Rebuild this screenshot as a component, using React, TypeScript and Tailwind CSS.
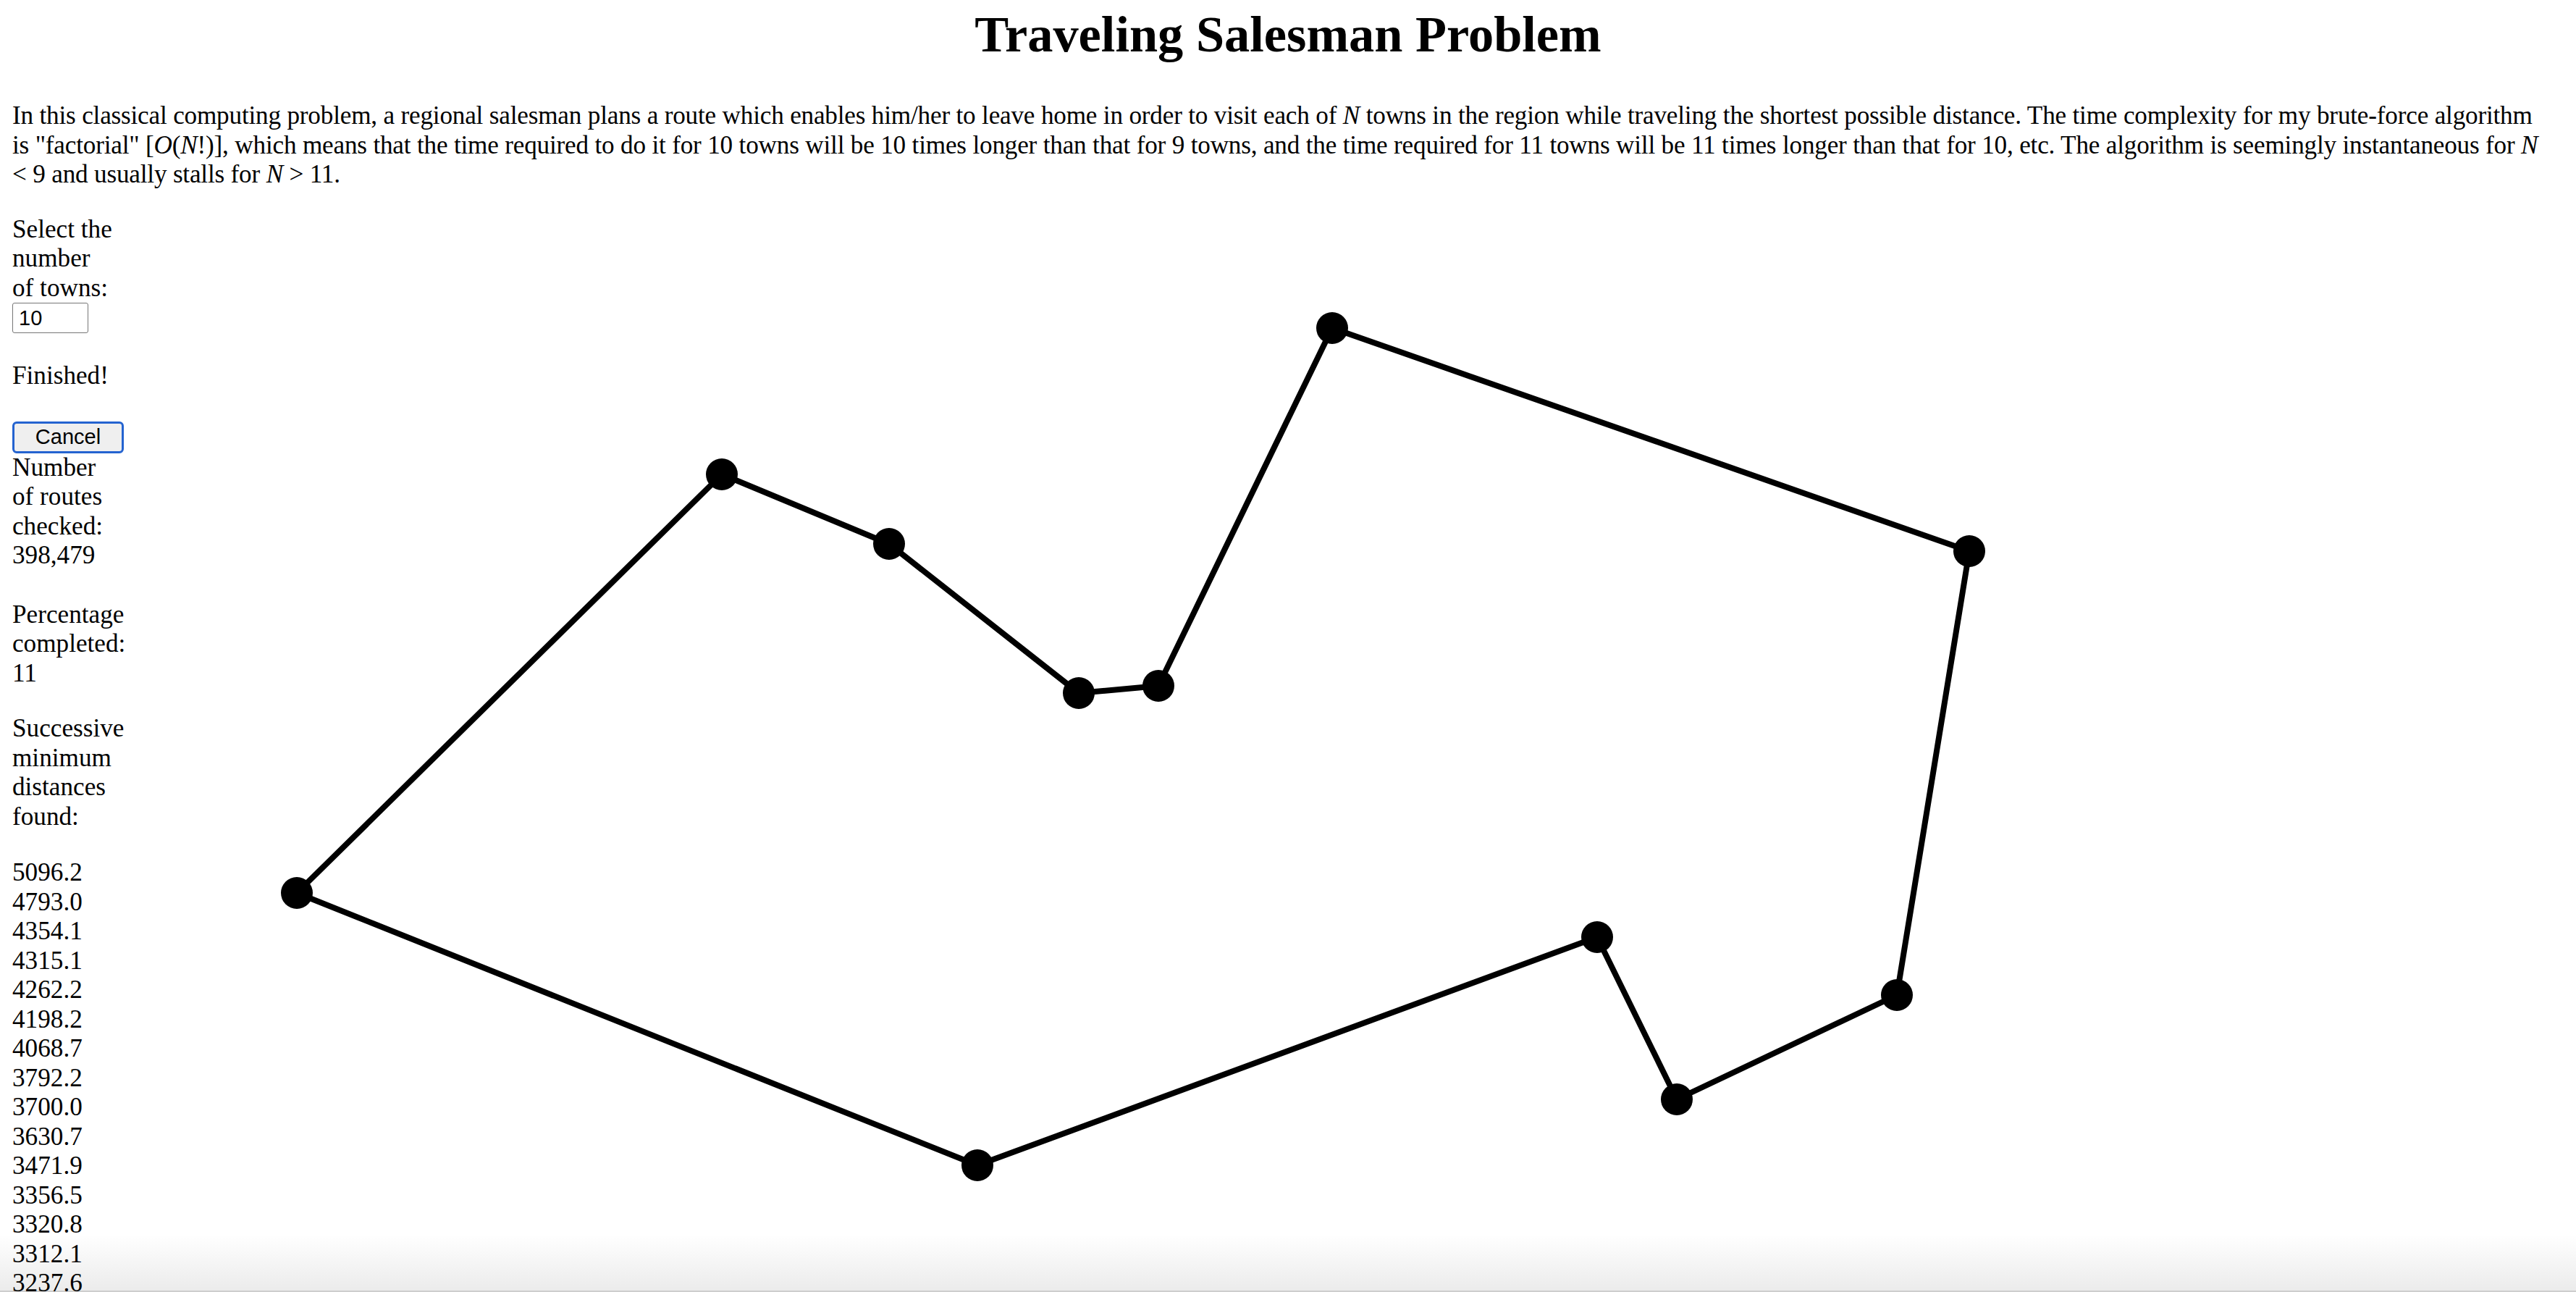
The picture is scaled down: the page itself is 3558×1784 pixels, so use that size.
import React from 'react';

type Pt = { x: number; y: number };

// route in page coordinates (full-size pixels)
const route: Pt[] = [
  { x: 410, y: 1232 },
  { x: 997, y: 654 },
  { x: 1228, y: 750 },
  { x: 1490, y: 956 },
  { x: 1600, y: 946 },
  { x: 1840, y: 452 },
  { x: 2720, y: 760 },
  { x: 2620, y: 1373 },
  { x: 2316, y: 1517 },
  { x: 2206, y: 1293 },
  { x: 1350, y: 1608 },
];

const minimums = [
  '5096.2', '4793.0', '4354.1', '4315.1', '4262.2', '4198.2', '4068.7', '3792.2',
  '3700.0', '3630.7', '3471.9', '3356.5', '3320.8', '3312.1', '3237.6',
];

const COL_W = 140;
const LEFT = 17;
const TOP = 296;

function RouteMap() {
  const x0 = LEFT + COL_W;
  const w = 3558 - x0;
  const h = 1784 - TOP;
  const pts = route.map((p) => `${p.x},${p.y}`).join(' ');
  return (
    <svg
      width={w}
      height={h}
      viewBox={`${x0} ${TOP} ${w} ${h}`}
      className="block shrink-0"
    >
      <polygon points={pts} fill="none" stroke="#000" strokeWidth={8} strokeLinejoin="round" />
      {route.map((p, i) => (
        <circle key={i} cx={p.x} cy={p.y} r={22} fill="#000" />
      ))}
    </svg>
  );
}

export default function App() {
  return (
    <div
      className="relative h-[1784px] overflow-hidden bg-white px-[17px] text-[35.2px] leading-[40.5px] text-black"
      style={{ fontFamily: '"Liberation Serif", "Times New Roman", serif' }}
    >
      <h1 className="pt-[7px] text-center text-[70.4px] font-bold leading-[81px]">
        Traveling Salesman Problem
      </h1>
      <p className="mt-[52px] whitespace-nowrap tracking-[-0.2px]">
        In this classical computing problem, a regional salesman plans a route which enables him/her to leave home in
        order to visit each of <i>N</i> towns in the region while traveling the shortest possible distance. The time
        complexity for my brute-force algorithm
        <br />
        is "factorial" [<i>O</i>(<i>N</i>!)], which means that the time required to do it for 10 towns will be 10
        times longer than that for 9 towns, and the time required for 11 towns will be 11 times longer than that for
        10, etc. The algorithm is seemingly instantaneous for <i>N</i>
        <br />
        &lt; 9 and usually stalls for <i>N</i> &gt; 11.
      </p>

      <div className="mt-[35px] flex items-start">
        <div className="w-[140px] shrink-0">
          <p>Select the number of towns:</p>
          <input
            type="text"
            defaultValue="10"
            className="block h-[42px] w-[105px] rounded-[3px] border-[1.5px] border-[#767676] bg-white px-[8px] text-[29px] leading-none outline-none"
            style={{ fontFamily: '"Liberation Sans", Arial, sans-serif' }}
          />
          <p className="mt-[39px]">Finished!</p>
          <button
            type="button"
            className="mt-[42px] block h-[44px] w-[154px] rounded-[6px] border-[3px] border-[#2463d0] bg-[#efefef] text-[29px] leading-none text-black"
            style={{ fontFamily: '"Liberation Sans", Arial, sans-serif' }}
          >
            Cancel
          </button>
          <p>
            Number of routes checked:
            <br />
            398,479
          </p>
          <p className="mt-[41px]">
            Percentage completed:
            <br />
            11
          </p>
          <p className="mt-[36px]">Successive minimum distances found:</p>
          <div className="mt-[37px]">
            {minimums.map((m) => (
              <div key={m}>{m}</div>
            ))}
          </div>
        </div>
        <RouteMap />
      </div>

      {/* browser bottom shade */}
      <div className="pointer-events-none absolute inset-x-0 bottom-0 h-[80px] bg-gradient-to-b from-black/0 to-black/[0.08]" />
      <div className="pointer-events-none absolute inset-x-0 bottom-0 h-[2px] bg-black/[0.12]" />
    </div>
  );
}
